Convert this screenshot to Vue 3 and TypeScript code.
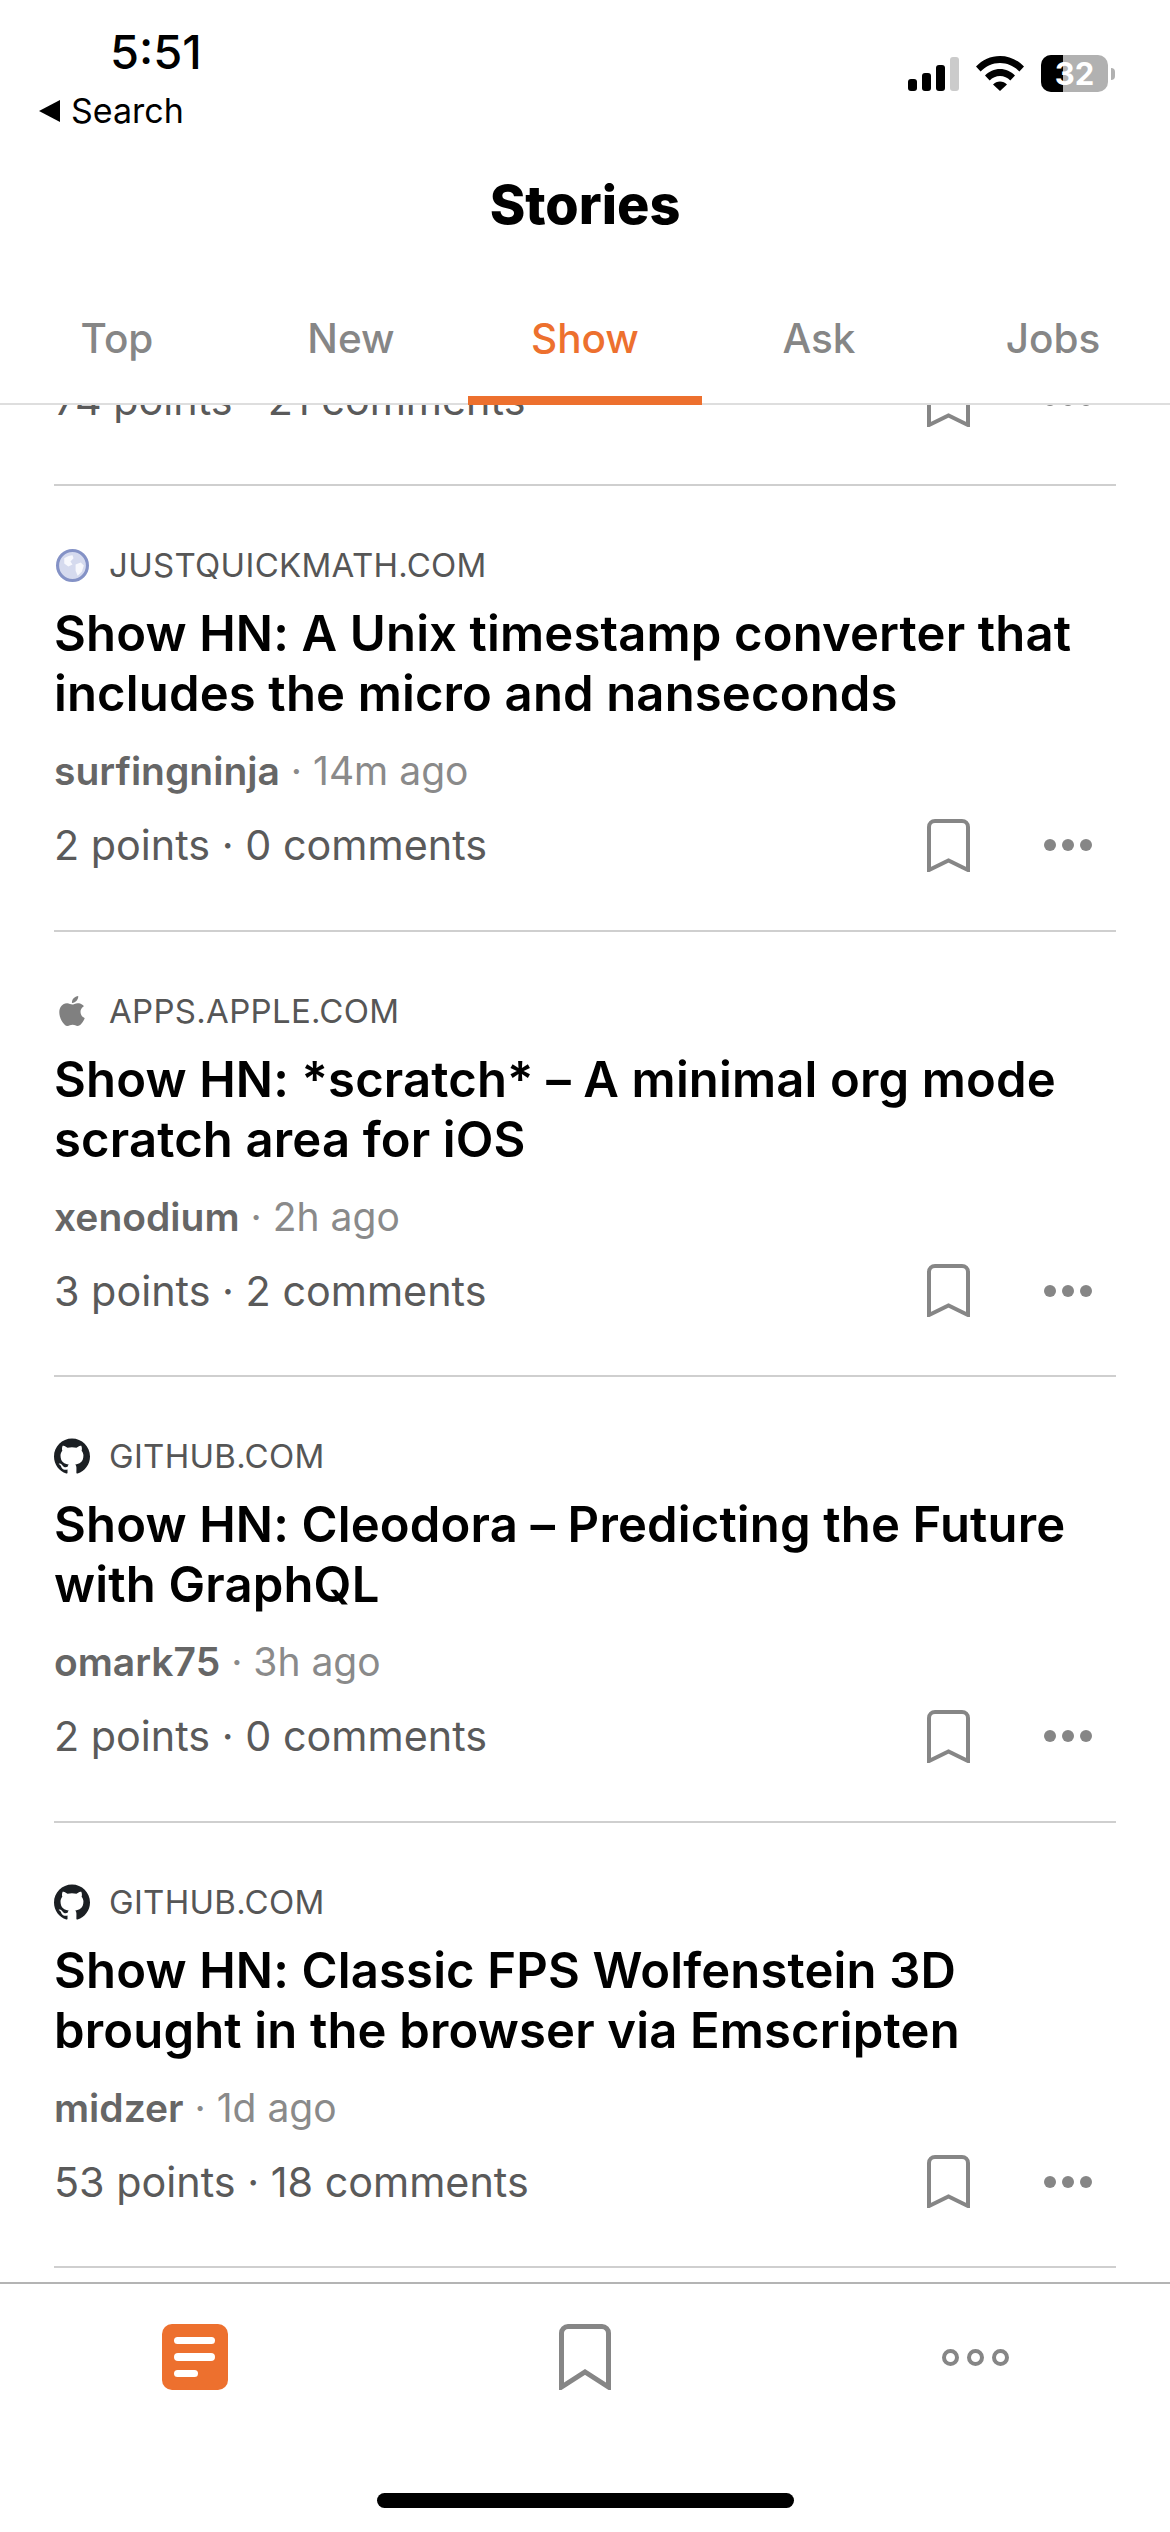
<script setup lang="ts">
interface Story {
  icon: 'globe' | 'apple' | 'github'
  source: string
  title: string
  author: string
  age: string
  points: string
}

const tabs: string[] = ['Top', 'New', 'Show', 'Ask', 'Jobs']
const stories: Story[] = [
  { icon: 'globe', source: 'JUSTQUICKMATH.COM', title: 'Show HN: A Unix timestamp converter that includes the micro and nanseconds', author: 'surfingninja', age: '14m ago', points: '2 points · 0 comments' },
  { icon: 'apple', source: 'APPS.APPLE.COM', title: 'Show HN: *scratch* – A minimal org mode scratch area for iOS', author: 'xenodium', age: '2h ago', points: '3 points · 2 comments' },
  { icon: 'github', source: 'GITHUB.COM', title: 'Show HN: Cleodora – Predicting the Future with GraphQL', author: 'omark75', age: '3h ago', points: '2 points · 0 comments' },
  { icon: 'github', source: 'GITHUB.COM', title: 'Show HN: Classic FPS Wolfenstein 3D brought in the browser via Emscripten', author: 'midzer', age: '1d ago', points: '53 points · 18 comments' },
]
const githubPath = 'M12 .297c-6.63 0-12 5.373-12 12 0 5.303 3.438 9.8 8.205 11.385.6.113.82-.258.82-.577 0-.285-.01-1.04-.015-2.04-3.338.724-4.042-1.61-4.042-1.61C4.422 18.07 3.633 17.7 3.633 17.7c-1.087-.744.084-.729.084-.729 1.205.084 1.838 1.236 1.838 1.236 1.07 1.835 2.809 1.305 3.495.998.108-.776.417-1.305.76-1.605-2.665-.3-5.466-1.332-5.466-5.93 0-1.31.465-2.38 1.235-3.22-.135-.303-.54-1.523.105-3.176 0 0 1.005-.322 3.3 1.23.96-.267 1.98-.399 3-.405 1.02.006 2.04.138 3 .405 2.28-1.552 3.285-1.23 3.285-1.23.645 1.653.24 2.873.12 3.176.765.84 1.23 1.91 1.23 3.22 0 4.61-2.805 5.625-5.475 5.92.42.36.81 1.096.81 2.22 0 1.606-.015 2.896-.03 3.286 0 .315.21.69.825.57C20.565 22.092 24 17.592 24 12.297c0-6.627-5.373-12-12-12'
const applePath = 'M12.152 6.896c-.948 0-2.415-1.078-3.96-1.04-2.04.027-3.91 1.183-4.961 3.014-2.117 3.675-.546 9.103 1.519 12.09 1.013 1.454 2.208 3.09 3.792 3.039 1.52-.065 2.09-.987 3.935-.987 1.831 0 2.35.987 3.96.948 1.637-.026 2.676-1.48 3.676-2.948 1.156-1.688 1.636-3.325 1.662-3.415-.039-.013-3.182-1.221-3.22-4.857-.026-3.04 2.48-4.494 2.597-4.559-1.429-2.09-3.623-2.324-4.39-2.376-2-.156-3.675 1.09-4.61 1.09zM15.53 3.83c.843-1.012 1.4-2.427 1.245-3.83-1.207.052-2.662.805-3.532 1.818-.78.896-1.454 2.338-1.273 3.714 1.338.104 2.715-.688 3.559-1.701'
</script>

<template>
  <div class="page">
    <header class="header">
      <div class="status">
        <div class="status-left">
          <div class="time">5:51</div>
          <div class="back"><span class="back-arrow"></span>Search</div>
        </div>
        <div class="status-right">
          <div class="signal">
            <span class="bar b1"></span><span class="bar b2"></span><span class="bar b3"></span><span class="bar b4"></span>
          </div>
          <svg class="wifi" width="48" height="36" viewBox="0 0 48 36">
            <path d="M0 11.5C6.3 5 14.7 1 24 1s17.7 4 24 10.5l-4.6 5C38.300 11.300 31.500 8 24 8S9.700 11.300 4.600 16.500z" />
            <path d="M9 20.500C13 16.500 18.200 14 24 14s11 2.500 15 6.500l-4.700 5C31.500 22.700 28 21 24 21s-7.500 1.700-10.300 4.500z" />
            <path d="M17 29.500C18.900 27.600 21.300 26.500 24 26.500s5.100 1.100 7 3L24 36z" />
          </svg>
          <div class="battery">
            <div class="battery-body"><span class="battery-fill"></span><span class="battery-num">32</span></div>
            <span class="battery-cap"></span>
          </div>
        </div>
      </div>
      <h1 class="title">Stories</h1>
      <nav class="tabs">
        <div v-for="t in tabs" :key="t" class="tab" :class="{ active: t === 'Show' }">{{ t }}</div>
      </nav>
    </header>

    <main class="list">
      <div class="stub">
        <div class="meta">
          <span class="points">74 points · 21 comments</span>
          <div class="actions">
            <svg class="bookmark" width="43" height="53" viewBox="0 0 43 53"><path d="M2 51V8a6 6 0 0 1 6-6h27a6 6 0 0 1 6 6v43L21.500 41.500z" /></svg>
            <div class="dots"><i></i><i></i><i></i></div>
          </div>
        </div>
      </div>
      <article v-for="s in stories" :key="s.title" class="story">
        <div class="source">
          <span class="favicon">
            <svg v-if="s.icon === 'globe'" class="soft" width="33" height="33" viewBox="0 0 32 32">
              <circle cx="16" cy="16" r="14.500" fill="#d5daee" stroke="#8492c6" stroke-width="3" />
              <path d="M8 9c3-2 6-3 8-3l1 3-3 3 2 3-4 2-4-3zM19 15l5-2 3 3-2 6-4 4-2-5z" fill="#f7f8fd" />
            </svg>
            <svg v-else-if="s.icon === 'apple'" class="soft" width="26" height="30" viewBox="2 0 20 24" preserveAspectRatio="none"><path :d="applePath" fill="#808080" /></svg>
            <svg v-else width="36" height="36" viewBox="0 0 24 24"><path :d="githubPath" fill="#1b1f23" /></svg>
          </span>
          <span class="domain">{{ s.source }}</span>
        </div>
        <h2 class="headline">{{ s.title }}</h2>
        <div class="byline"><span class="author">{{ s.author }}</span><span class="age"> · {{ s.age }}</span></div>
        <div class="meta">
          <span class="points">{{ s.points }}</span>
          <div class="actions">
            <svg class="bookmark" width="43" height="53" viewBox="0 0 43 53"><path d="M2 51V8a6 6 0 0 1 6-6h27a6 6 0 0 1 6 6v43L21.500 41.500z" /></svg>
            <div class="dots"><i></i><i></i><i></i></div>
          </div>
        </div>
      </article>
    </main>

    <footer class="tabbar">
      <div class="tabbar-items">
        <div class="tabbar-item">
          <div class="stories-icon"><span class="l1"></span><span class="l1"></span><span class="l2"></span></div>
        </div>
        <div class="tabbar-item">
          <svg width="52" height="66" viewBox="0 0 52 66"><path d="M2.500 63V9a6.500 6.500 0 0 1 6.500-6.500h34a6.500 6.500 0 0 1 6.500 6.500v54L26 48z" fill="none" stroke="#868686" stroke-width="5" /></svg>
        </div>
        <div class="tabbar-item">
          <div class="rings"><i></i><i></i><i></i></div>
        </div>
      </div>
      <div class="home-bar"></div>
    </footer>
  </div>
</template>

<style scoped>
.page {
  width: 1170px;
  height: 2532px;
  display: flex;
  flex-direction: column;
  overflow: hidden;
  background: #fff;
  font-family: Inter, "Liberation Sans", sans-serif;
  color: #000;
}
.header {
  position: relative;
  z-index: 2;
  height: 405px;
  flex: none;
  background: #fff;
  display: flex;
  flex-direction: column;
}
.status {
  display: flex;
  justify-content: space-between;
  padding: 26px 55px 0 39px;
  height: 105px;
}
.time {
  font-size: 47px;
  line-height: 52px;
  font-weight: 500;
  margin-left: 71px;
}
.back {
  display: flex;
  align-items: center;
  gap: 11px;
  margin-top: 13px;
  font-size: 34px;
  line-height: 40px;
  font-weight: 400;
}
.back-arrow {
  width: 0;
  height: 0;
  border-style: solid;
  border-width: 11px 21px 11px 0;
  border-color: transparent #000 transparent transparent;
}
.status-right {
  display: flex;
  align-items: flex-start;
  padding-top: 29px;
}
.signal {
  display: flex;
  align-items: flex-end;
  gap: 5px;
  height: 34px;
  margin-top: 2px;
}
.bar { width: 9px; border-radius: 3px; background: #000; }
.b1 { height: 12px; }
.b2 { height: 18px; }
.b3 { height: 26px; }
.b4 { height: 34px; background: #cbcbcb; }
.wifi { margin-left: 17px; fill: #000; }
.battery { display: flex; align-items: center; margin-left: 17px; }
.battery-body {
  position: relative;
  width: 67px;
  height: 37px;
  border-radius: 10px;
  overflow: hidden;
  background: #b1b1b1;
  display: flex;
  align-items: center;
  justify-content: center;
}
.battery-fill { position: absolute; left: 0; top: 0; bottom: 0; width: 22px; background: #000; }
.battery-num {
  position: relative;
  color: #fff;
  font-size: 31px;
  line-height: 37px;
  font-weight: 700;
}
.battery-cap {
  width: 4px;
  height: 12px;
  margin-left: 3px;
  border-radius: 0 4px 4px 0;
  background: #b1b1b1;
}
.title {
  margin: 44px 0 0;
  text-align: center;
  font-size: 54px;
  line-height: 60px;
  font-weight: 800;
}
.tabs {
  margin-top: 38px;
  height: 132px;
  display: flex;
  box-sizing: border-box;
  border-bottom: 2px solid #dedede;
}
.tab {
  position: relative;
  flex: 1;
  display: flex;
  align-items: center;
  justify-content: center;
  font-size: 40.5px;
  font-weight: 550;
  color: #868686;
}
.tab.active { color: #ed702e; }
.tab.active::after {
  content: "";
  position: absolute;
  left: 0;
  right: 0;
  bottom: -2px;
  height: 9px;
  background: #ed702e;
}
.list {
  flex: 1;
  min-height: 0;
  overflow: hidden;
}
.stub {
  margin: -30px 54px 0;
  height: 111px;
  box-sizing: border-box;
  border-bottom: 2px solid #cfcfcf;
}
.story {
  margin: 0 54px;
  height: 445.5px;
  box-sizing: border-box;
  padding-top: 59px;
  border-bottom: 2px solid #cfcfcf;
}
.source {
  display: flex;
  align-items: center;
  height: 40px;
}
.favicon {
  width: 36px;
  height: 36px;
  margin-right: 19px;
  display: flex;
  align-items: center;
  justify-content: center;
  flex: none;
}
.soft { filter: blur(0.6px); }
.domain {
  font-size: 33px;
  line-height: 40px;
  color: #565656;
  letter-spacing: 0.3px;
}
.headline {
  margin: 19px 0 0;
  font-size: 49px;
  line-height: 60px;
  font-weight: 600;
  letter-spacing: 0.15px;
  color: #000;
}
.byline {
  margin-top: 22px;
  font-size: 39px;
  line-height: 50px;
  color: #8a8a8a;
}
.author {
  font-weight: 600;
  color: #666;
}
.meta {
  margin-top: 24px;
  display: flex;
  align-items: center;
  justify-content: space-between;
  height: 50px;
}
.stub .meta { margin-top: 0; }
.points {
  font-size: 41.3px;
  line-height: 50px;
  color: #5a5a5a;
}
.actions {
  display: flex;
  align-items: center;
  gap: 74px;
  padding-right: 24px;
}
.bookmark path { fill: none; stroke: #868686; stroke-width: 4; }
.dots { display: flex; gap: 6px; }
.dots i {
  display: block;
  width: 12px;
  height: 12px;
  border-radius: 50%;
  background: #868686;
}
.tabbar {
  flex: none;
  height: 250px;
  box-sizing: border-box;
  border-top: 2px solid #b4b4b4;
  display: flex;
  flex-direction: column;
  align-items: center;
}
.tabbar-items {
  width: 100%;
  margin-top: 40px;
  height: 66px;
  display: flex;
}
.tabbar-item {
  flex: 1;
  display: flex;
  align-items: center;
  justify-content: center;
}
.stories-icon {
  width: 66px;
  height: 66px;
  box-sizing: border-box;
  border-radius: 10px;
  background: #ed702e;
  padding: 13px 12px;
  display: flex;
  flex-direction: column;
  gap: 9px;
}
.stories-icon span {
  display: block;
  height: 8px;
  border-radius: 4px;
  background: #fff;
}
.stories-icon .l1 { width: 41px; }
.stories-icon .l2 { width: 24px; }
.rings { display: flex; gap: 8px; }
.rings i {
  display: block;
  width: 17px;
  height: 17px;
  box-sizing: border-box;
  border: 4px solid #868686;
  border-radius: 50%;
}
.home-bar {
  margin-top: 103px;
  width: 417px;
  height: 15px;
  border-radius: 8px;
  background: #000;
}
</style>

<style>
html, body { margin: 0; background: #fff; }
</style>
